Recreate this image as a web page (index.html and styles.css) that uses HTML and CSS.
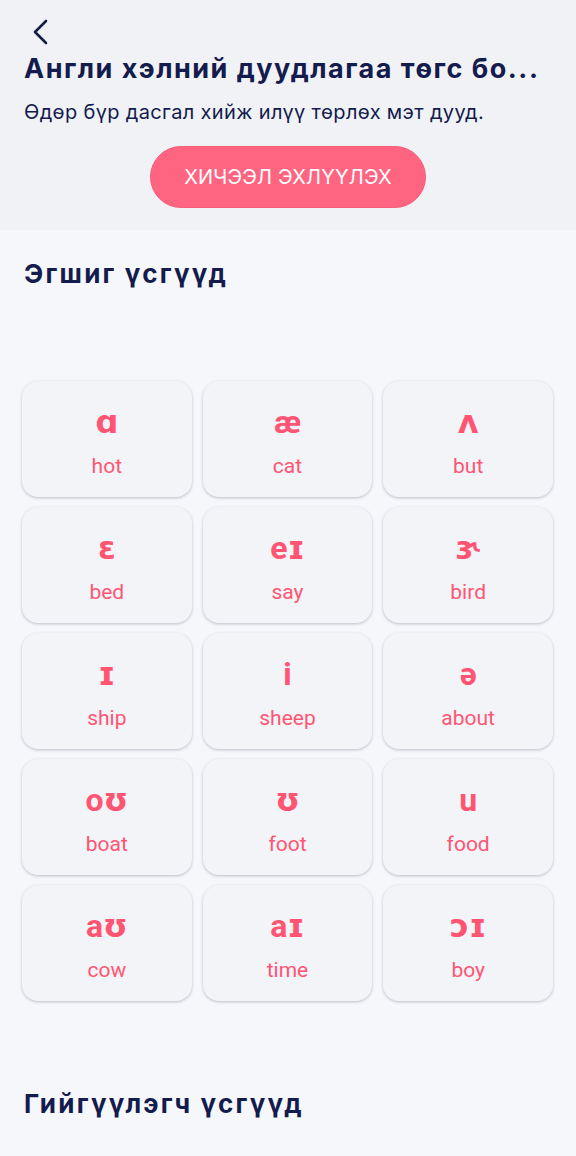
FILE: index.html
```html
<!DOCTYPE html>
<html>
<head>
    <title>Англи хэлний дуудлага</title>
    <link rel="stylesheet" href="styles.css">
</head>
<body>
    <div class="header">
        <button class="back" aria-label="Буцах">
            <svg width="20" height="28" viewBox="0 0 20 28">
                <path d="M16 3 L5 14 L16 25" fill="none" stroke="#141b4d" stroke-width="2.6" stroke-linecap="round" stroke-linejoin="round"/>
            </svg>
        </button>
        <h1>Англи хэлний дуудлагаа төгс бо...</h1>
        <p class="lead">Өдөр бүр дасгал хийж илүү төрлөх мэт дууд.</p>
        <div class="action">
            <button class="start">ХИЧЭЭЛ ЭХЛҮҮЛЭХ</button>
        </div>
    </div>

    <div class="section">
        <h2>Эгшиг үсгүүд</h2>
        <div class="grid">
            <div class="card"><span class="sym">ɑ</span><span class="word">hot</span></div>
            <div class="card"><span class="sym">æ</span><span class="word">cat</span></div>
            <div class="card"><span class="sym">ʌ</span><span class="word">but</span></div>
            <div class="card"><span class="sym">ɛ</span><span class="word">bed</span></div>
            <div class="card"><span class="sym">eɪ</span><span class="word">say</span></div>
            <div class="card"><span class="sym">ɝ</span><span class="word">bird</span></div>
            <div class="card"><span class="sym">ɪ</span><span class="word">ship</span></div>
            <div class="card"><span class="sym">i</span><span class="word">sheep</span></div>
            <div class="card"><span class="sym">ə</span><span class="word">about</span></div>
            <div class="card"><span class="sym">oʊ</span><span class="word">boat</span></div>
            <div class="card"><span class="sym">ʊ</span><span class="word">foot</span></div>
            <div class="card"><span class="sym">u</span><span class="word">food</span></div>
            <div class="card"><span class="sym">aʊ</span><span class="word">cow</span></div>
            <div class="card"><span class="sym">aɪ</span><span class="word">time</span></div>
            <div class="card"><span class="sym">ɔɪ</span><span class="word">boy</span></div>
        </div>
    </div>

    <div class="section">
        <h2>Гийгүүлэгч үсгүүд</h2>
    </div>
</body>
</html>
```

FILE: styles.css
```css
body {
    font-family: Inter, "Noto Sans", sans-serif;
    background-color: #f6f7fb;
    color: #141b4d;
    margin: 0;
    padding: 0;
}

.header {
    background-color: #f0f2f6;
    padding: 18px 24px 22px;
}

.back {
    display: block;
    background: none;
    border: none;
    padding: 0;
    margin-left: 6px;
    height: 28px;
    cursor: pointer;
}

h1 {
    font-size: 27px;
    font-weight: 700;
    margin: 5px 0 0;
    line-height: 36px;
    letter-spacing: 1.5px;
    white-space: nowrap;
}

.lead {
    font-size: 20px;
    margin: 12px 0 0;
    line-height: 26px;
    letter-spacing: 0.35px;
}

.action {
    display: flex;
    justify-content: center;
    margin-top: 21px;
}

.start {
    width: 276px;
    height: 62px;
    background-color: #ff6580;
    border: 1px solid #f85d79;
    border-radius: 31px;
    color: #fff;
    font-family: Inter, sans-serif;
    font-size: 20px;
    letter-spacing: 0.2px;
    cursor: pointer;
}

.section {
    padding: 0 23px 0 22px;
}

h2 {
    font-size: 26px;
    font-weight: 700;
    margin: 0;
    padding: 26px 0 0 2px;
    line-height: 36px;
    letter-spacing: 2.2px;
}

.grid {
    display: grid;
    grid-template-columns: repeat(3, 1fr);
    column-gap: 11px;
    row-gap: 10px;
    margin-top: 89px;
    margin-bottom: 59px;
}

.card {
    height: 116px;
    background-color: #f2f4f8;
    border-radius: 16px;
    box-shadow: 0 1px 3px rgba(40, 45, 70, 0.28);
    display: flex;
    flex-direction: column;
    align-items: center;
    color: #ff5573;
    font-family: Roboto, "DejaVu Sans", sans-serif;
}

.sym {
    font-size: 32px;
    font-weight: 700;
    line-height: 32px;
    margin-top: 25px;
}

.word {
    font-size: 21px;
    line-height: 24px;
    margin-top: 16px;
}
```
